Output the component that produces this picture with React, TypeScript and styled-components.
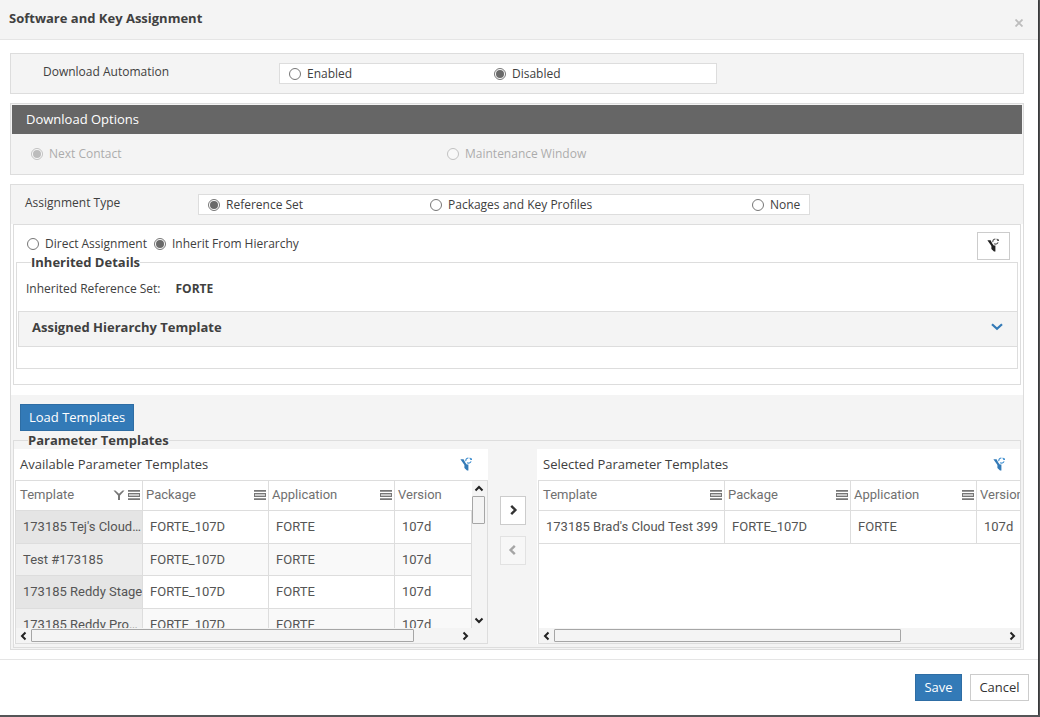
import React from "react";
import styled, { createGlobalStyle, css } from "styled-components";

const line = "#dddddd";
const panelGray = "#f4f4f4";
const ink = "#404040";
const blue = "#337ab7";

const GlobalStyle = createGlobalStyle`
  * { box-sizing: border-box; }
  body {
    margin: 0;
    background: #555557;
    color: ${ink};
    font: 12px/18px "Open Sans", sans-serif;
  }
  button, input { font: inherit; color: inherit; margin: 0; }
`;

const Dialog = styled.div`
  margin-right: 2px;
  background: #ffffff;
  box-shadow: 0 0 2px #000000;
`;

const DialogHeader = styled.header`
  display: flex;
  justify-content: space-between;
  height: 40px;
  padding: 9px 13px 0 9px;
  background: ${panelGray};
  border-bottom: 1px solid #e5e5e5;
`;

const DialogTitle = styled.h1`
  margin: 0;
  font-size: 13px;
  line-height: 18px;
  font-weight: 700;
`;

const PlainButton = styled.button`
  display: flex;
  align-items: center;
  justify-content: center;
  padding: 0;
  border: 0;
  background: none;
`;

const CloseButton = styled(PlainButton)`
  width: 12px;
  height: 28px;
`;

const DialogBody = styled.main`
  display: flex;
  flex-direction: column;
  gap: 9px;
  padding: 13px 14px 9px 10px;
`;

const Panel = styled.section`
  border: 1px solid ${line};
  background: ${panelGray};
`;

const SettingRow = styled.div<{ $indent: number }>`
  display: flex;
  align-items: flex-start;
  padding: 9px 9px 9px ${(p) => p.$indent}px;
`;

const SettingLabel = styled.span<{ $width: number }>`
  flex: none;
  width: ${(p) => p.$width}px;
`;

const RadioBox = styled.div<{ $width: number; $columns: string }>`
  display: grid;
  grid-template-columns: ${(p) => p.$columns};
  align-items: center;
  width: ${(p) => p.$width}px;
  height: 21px;
  padding-left: 9px;
  border: 1px solid ${line};
  background: #ffffff;
`;

const RadioLabel = styled.label<{ $disabled?: boolean }>`
  display: flex;
  align-items: center;
  gap: 6px;
  white-space: nowrap;
  ${(p) => p.$disabled && css`opacity: 0.4;`}
`;

const RadioInput = styled.input`
  appearance: none;
  display: grid;
  place-items: center;
  width: 12px;
  height: 12px;
  border: 1px solid #767676;
  border-radius: 50%;
  background: #ffffff;
  &:checked::before {
    content: "";
    width: 8px;
    height: 8px;
    border-radius: 50%;
    background: #6a6a6a;
  }
`;

const OptionsPanel = styled(Panel)`
  padding: 1px 1px 0;
`;

const OptionsTitle = styled.h2`
  margin: 0;
  padding-left: 14px;
  background: #666666;
  color: #ffffff;
  font-size: 13px;
  line-height: 29px;
  font-weight: 400;
`;

const OptionsRow = styled.div`
  display: grid;
  grid-template-columns: 416px 1fr;
  align-items: center;
  height: 40px;
  padding-left: 19px;
`;

const WhiteArea = styled.div`
  padding: 0 2px 10px;
  background: #ffffff;
`;

const AssignmentBox = styled.div`
  padding: 0 2px 15px;
  border: 1px solid ${line};
`;

const AssignmentHead = styled.div`
  display: flex;
  align-items: flex-start;
  justify-content: space-between;
  height: 28px;
  padding: 7px 8px 0 11px;
`;

const RadioPair = styled.div`
  display: flex;
  gap: 7px;
  padding-top: 3px;
`;

const OutlineButton = styled.button`
  display: flex;
  align-items: center;
  justify-content: center;
  flex: none;
  padding: 0;
  border: 1px solid #cccccc;
  background: #ffffff;
  color: #333333;
`;

const ResetButton = styled(OutlineButton)`
  width: 33px;
  height: 28px;
  padding-bottom: 2px;
`;

const Group = styled.fieldset`
  min-width: 0;
  margin: 0;
  padding: 0;
  border: 1px solid ${line};
`;

const GroupLegend = styled.legend`
  margin-left: 14px;
  padding: 0;
  font-size: 13px;
  line-height: 18px;
  font-weight: 700;
`;

const Details = styled.dl`
  display: flex;
  gap: 15px;
  margin: 0;
  padding: 9px 9px 13px;
`;

const Term = styled.dt``;

const Value = styled.dd`
  margin: 0;
  font-weight: 700;
`;

const Accordion = styled.button`
  display: flex;
  align-items: center;
  justify-content: space-between;
  width: calc(100% - 1px);
  height: 36px;
  margin: 0 0 21px 1px;
  padding: 0 14px 4px 13px;
  border: 1px solid ${line};
  border-right: 0;
  background: ${panelGray};
  font-size: 13px;
  font-weight: 700;
`;

const TemplateArea = styled.div`
  padding: 9px 2px 1px;
`;

const PrimaryButton = styled.button`
  min-width: 47px;
  height: 27px;
  padding: 0 8px 2px;
  border: 1px solid #2e6da4;
  background: ${blue};
  color: #ffffff;
  font-size: 13px;
  line-height: 18px;
`;

const LoadButton = styled(PrimaryButton)`
  display: block;
  margin-left: 7px;
`;

const CancelButton = styled(OutlineButton)`
  min-width: 59px;
  height: 27px;
  padding: 0 8px 2px;
  font-size: 13px;
`;

const Transfer = styled.div`
  display: grid;
  grid-template-columns: minmax(0, 474fr) 49px minmax(0, 483fr);
  padding-bottom: 3px;
`;

const ListPanel = styled.section`
  min-width: 0;
  padding-left: 1px;
  background: #ffffff;
`;

const ListHead = styled.div<{ $end: number }>`
  display: flex;
  align-items: center;
  justify-content: space-between;
  height: 31px;
  padding: 0 ${(p) => p.$end}px 1px 5px;
`;

const ListTitle = styled.h3`
  margin: 0;
  font-size: 13px;
  font-weight: 400;
`;

const GridFrame = styled.div<{ $open?: boolean }>`
  border: 1px solid ${line};
  ${(p) => p.$open && css`border-right: 0;`}
`;

const GridMain = styled.div`
  display: flex;
  height: 147px;
`;

const GridView = styled.div`
  flex: 1;
  min-width: 0;
  overflow: hidden;
`;

const Table = styled.table<{ $width: string }>`
  width: ${(p) => p.$width};
  table-layout: fixed;
  border-collapse: separate;
  border-spacing: 0;
  font: 13px/18px Roboto, sans-serif;
`;

const HeadCell = styled.th<{ $width?: number }>`
  width: ${(p) => (p.$width ? p.$width + "px" : "auto")};
  height: 30px;
  padding: 0 2px 2px 3px;
  border-right: 1px solid ${line};
  border-bottom: 1px solid ${line};
  color: #707070;
  font-weight: 400;
  text-align: left;
  &:first-child { padding-left: 4px; }
  &:last-child { border-right: 0; }
`;

const HeadContent = styled.div`
  display: flex;
  align-items: center;
  justify-content: space-between;
`;

const HeadTools = styled.span`
  display: flex;
  align-items: center;
  gap: 3px;
`;

const Row = styled.tr<{ $marked?: boolean }>`
  height: 33px;
  &:nth-child(even) {
    height: 32px;
    background: #f9f9f9;
  }
  ${(p) =>
    p.$marked &&
    css`
      td:first-child { background: #e5e5e5; }
      &:nth-child(even) td:first-child { background: #efefef; }
    `}
`;

const Cell = styled.td`
  overflow: hidden;
  padding: 0 0 0 7px;
  border-right: 1px solid ${line};
  border-bottom: 1px solid ${line};
  color: #555555;
  white-space: nowrap;
`;

const VerticalBar = styled.div`
  display: flex;
  flex-direction: column;
  width: 15px;
  padding: 0 2px 1px 0;
  background: ${panelGray};
`;

const BottomBar = styled.div<{ $corner?: boolean }>`
  display: flex;
  height: 15px;
  padding-right: ${(p) => (p.$corner ? 15 : 1)}px;
  background: ${panelGray};
`;

const ArrowButton = styled(PlainButton)<{ $narrow?: boolean }>`
  flex: none;
  width: ${(p) => (p.$narrow ? 13 : 15)}px;
  height: 15px;
  color: #222222;
`;

const Track = styled.div`
  flex: 1;
  min-width: 0;
`;

const Thumb = styled.div<{ $wide?: string; $tall?: string }>`
  width: ${(p) => p.$wide ?? "13px"};
  height: ${(p) => p.$tall ?? "13px"};
  margin-top: ${(p) => (p.$wide ? 1 : 0)}px;
  border: 1px solid #a6a6a6;
  border-radius: 1px;
  background: ${panelGray};
`;

const MoveButtons = styled.div`
  display: flex;
  flex-direction: column;
  align-items: center;
  gap: 11px;
  padding-top: 47px;
`;

const MoveButton = styled(OutlineButton)`
  width: 26px;
  height: 29px;
  padding-bottom: 2px;
  &:disabled {
    border-color: #e2e2e2;
    background: #f7f7f7;
    color: #a5a5a5;
  }
`;

const DialogFooter = styled.footer`
  display: flex;
  justify-content: flex-end;
  gap: 8px;
  padding: 14px 9px;
  border-top: 1px solid #e5e5e5;
`;

type Direction = "up" | "down" | "left" | "right";

const chevrons: Record<Direction, string> = {
  up: "M1.5 6.5 5 3 8.5 6.5",
  down: "M1.5 3.5 5 7 8.5 3.5",
  left: "M6.5 1.5 3 5 6.5 8.5",
  right: "M3.5 1.5 7 5 3.5 8.5",
};

const Chevron = ({ to, size = 10 }: { to: Direction; size?: number }) => (
  <svg width={size} height={size} viewBox="0 0 10 10" fill="none" stroke="currentColor" strokeWidth="2">
    <path d={chevrons[to]} />
  </svg>
);

const FilterResetIcon = ({ color, accent }: { color: string; accent: string }) => (
  <svg width="13" height="14" viewBox="0 0 13 14" fill="none">
    <path d="M0.4 2.2H3.6L5.4 5.8 6.8 7.4H8.4V13.4H7L4.4 11V8Z" fill={color} />
    <path d="M5.8 4.1A2.7 2.7 0 0 1 8.4 1M9.6 1A2.7 2.7 0 0 1 11.2 2.6M11.1 4.4A2.7 2.7 0 0 1 7 5.6" stroke={accent} strokeWidth="1.1" />
    <path d="M9.8 3H12V1Z" fill={accent} />
  </svg>
);

const MenuIcon = () => (
  <svg width="12" height="10" viewBox="0 0 12 10" shapeRendering="crispEdges">
    <path fill="#999999" d="M0 1h12v1H0zM0 8h12v1H0z" />
    <path fill="#777777" d="M0 0h12v1H0zM0 3h12v1H0zM0 6h12v1H0zM0 9h12v1H0zM0 4h1v2H0zM11 4h1v2h-1z" />
    <path fill="#c8c8c8" d="M1 4h10v2H1z" />
  </svg>
);

const ColumnFilterIcon = () => (
  <svg width="12" height="10" viewBox="0 0 12 10" fill="none">
    <path d="M0.5 0.5 5 5.4V10H7V5.4L11.5 0.5H9.6L6 3.8 2.4 0.5Z" fill="#777777" />
  </svg>
);

interface RadioProps {
  name: string;
  text: string;
  checked?: boolean;
  disabled?: boolean;
}

const Radio = ({ name, text, checked, disabled }: RadioProps) => (
  <RadioLabel $disabled={disabled}>
    <RadioInput type="radio" name={name} defaultChecked={checked} disabled={disabled} />
    {text}
  </RadioLabel>
);

interface Column {
  title: string;
  width?: number;
  menu?: boolean;
  filtered?: boolean;
}

const ColumnHead = ({ title, width, menu, filtered }: Column) => (
  <HeadCell $width={width}>
    <HeadContent>
      {title}
      <HeadTools>
        {filtered && <ColumnFilterIcon />}
        {menu && (
          <PlainButton aria-label={`${title} column menu`}>
            <MenuIcon />
          </PlainButton>
        )}
      </HeadTools>
    </HeadContent>
  </HeadCell>
);

interface GridProps {
  columns: Column[];
  names: string[];
  width: string;
  marked?: boolean;
}

const TemplateTable = ({ columns, names, width, marked }: GridProps) => (
  <GridView>
    <Table $width={width}>
      <thead>
        <tr>
          {columns.map((c) => (
            <ColumnHead key={c.title} {...c} />
          ))}
        </tr>
      </thead>
      <tbody>
        {names.map((name) => (
          <Row key={name} $marked={marked}>
            <Cell>{name}</Cell>
            <Cell>FORTE_107D</Cell>
            <Cell>FORTE</Cell>
            <Cell>107d</Cell>
          </Row>
        ))}
      </tbody>
    </Table>
  </GridView>
);

const HorizontalBar = ({ thumb, corner }: { thumb: string; corner?: boolean }) => (
  <BottomBar $corner={corner}>
    <ArrowButton aria-label="Scroll left">
      <Chevron to="left" />
    </ArrowButton>
    <Track>
      <Thumb $wide={thumb} />
    </Track>
    <ArrowButton aria-label="Scroll right">
      <Chevron to="right" />
    </ArrowButton>
  </BottomBar>
);

const availableColumns: Column[] = [
  { title: "Template", width: 127, menu: true, filtered: true },
  { title: "Package", width: 126, menu: true },
  { title: "Application", width: 126, menu: true },
  { title: "Version" },
];

const selectedColumns: Column[] = [
  { title: "Template", width: 186, menu: true },
  { title: "Package", width: 126, menu: true },
  { title: "Application", width: 126, menu: true },
  { title: "Version", width: 126, menu: true },
];

const availableNames = ["173185 Tej's Cloud…", "Test #173185", "173185 Reddy Stage", "173185 Reddy Pro…"];

export default function App() {
  return (
    <>
      <GlobalStyle />
      <Dialog role="dialog" aria-labelledby="dialog-title">
        <DialogHeader>
          <DialogTitle id="dialog-title">Software and Key Assignment</DialogTitle>
          <CloseButton aria-label="Close">
            <svg width="8" height="8" viewBox="0 0 8 8" stroke="#bdbdbd" strokeWidth="1.8">
              <path d="M0.5 0.5 7.5 7.5M7.5 0.5 0.5 7.5" />
            </svg>
          </CloseButton>
        </DialogHeader>

        <DialogBody>
          <Panel>
            <SettingRow $indent={32}>
              <SettingLabel $width={236}>Download Automation</SettingLabel>
              <RadioBox $width={438} $columns="205px 1fr" role="radiogroup" aria-label="Download Automation">
                <Radio name="automation" text="Enabled" />
                <Radio name="automation" text="Disabled" checked />
              </RadioBox>
            </SettingRow>
          </Panel>

          <OptionsPanel>
            <OptionsTitle>Download Options</OptionsTitle>
            <OptionsRow>
              <Radio name="options" text="Next Contact" checked disabled />
              <Radio name="options" text="Maintenance Window" disabled />
            </OptionsRow>
          </OptionsPanel>

          <Panel>
            <SettingRow $indent={14}>
              <SettingLabel $width={173}>Assignment Type</SettingLabel>
              <RadioBox $width={612} $columns="222px 322px 1fr" role="radiogroup" aria-label="Assignment Type">
                <Radio name="type" text="Reference Set" checked />
                <Radio name="type" text="Packages and Key Profiles" />
                <Radio name="type" text="None" />
              </RadioBox>
            </SettingRow>

            <WhiteArea>
              <AssignmentBox>
                <AssignmentHead>
                  <RadioPair>
                    <Radio name="source" text="Direct Assignment" />
                    <Radio name="source" text="Inherit From Hierarchy" checked />
                  </RadioPair>
                  <ResetButton aria-label="Reset filters">
                    <FilterResetIcon color="#222222" accent="#555555" />
                  </ResetButton>
                </AssignmentHead>
                <Group>
                  <GroupLegend>Inherited Details</GroupLegend>
                  <Details>
                    <Term>Inherited Reference Set:</Term>
                    <Value>FORTE</Value>
                  </Details>
                  <Accordion aria-expanded="false">
                    Assigned Hierarchy Template
                    <svg width="12" height="8" viewBox="0 0 12 8" fill="none" stroke={blue} strokeWidth="2.2">
                      <path d="M1 1.2 6 5.8 11 1.2" />
                    </svg>
                  </Accordion>
                </Group>
              </AssignmentBox>
            </WhiteArea>

            <TemplateArea>
              <LoadButton>Load Templates</LoadButton>
              <Group>
                <GroupLegend>Parameter Templates</GroupLegend>
                <Transfer>
                  <ListPanel>
                    <ListHead $end={15}>
                      <ListTitle>Available Parameter Templates</ListTitle>
                      <PlainButton aria-label="Reset available filters">
                        <FilterResetIcon color={blue} accent="#3f8fd0" />
                      </PlainButton>
                    </ListHead>
                    <GridFrame>
                      <GridMain>
                        <TemplateTable columns={availableColumns} names={availableNames} width="100%" marked />
                        <VerticalBar>
                          <ArrowButton $narrow aria-label="Scroll up">
                            <Chevron to="up" />
                          </ArrowButton>
                          <Track>
                            <Thumb $tall="24%" />
                          </Track>
                          <ArrowButton $narrow aria-label="Scroll down">
                            <Chevron to="down" />
                          </ArrowButton>
                        </VerticalBar>
                      </GridMain>
                      <HorizontalBar thumb="90%" corner />
                    </GridFrame>
                  </ListPanel>

                  <MoveButtons>
                    <MoveButton aria-label="Add template">
                      <Chevron to="right" size={12} />
                    </MoveButton>
                    <MoveButton aria-label="Remove template" disabled>
                      <Chevron to="left" size={12} />
                    </MoveButton>
                  </MoveButtons>

                  <ListPanel>
                    <ListHead $end={14}>
                      <ListTitle>Selected Parameter Templates</ListTitle>
                      <PlainButton aria-label="Reset selected filters">
                        <FilterResetIcon color={blue} accent="#3f8fd0" />
                      </PlainButton>
                    </ListHead>
                    <GridFrame $open>
                      <GridMain>
                        <TemplateTable columns={selectedColumns} names={["173185 Brad's Cloud Test 399"]} width="564px" />
                      </GridMain>
                      <HorizontalBar thumb="77%" />
                    </GridFrame>
                  </ListPanel>
                </Transfer>
              </Group>
            </TemplateArea>
          </Panel>
        </DialogBody>

        <DialogFooter>
          <PrimaryButton>Save</PrimaryButton>
          <CancelButton>Cancel</CancelButton>
        </DialogFooter>
      </Dialog>
    </>
  );
}
